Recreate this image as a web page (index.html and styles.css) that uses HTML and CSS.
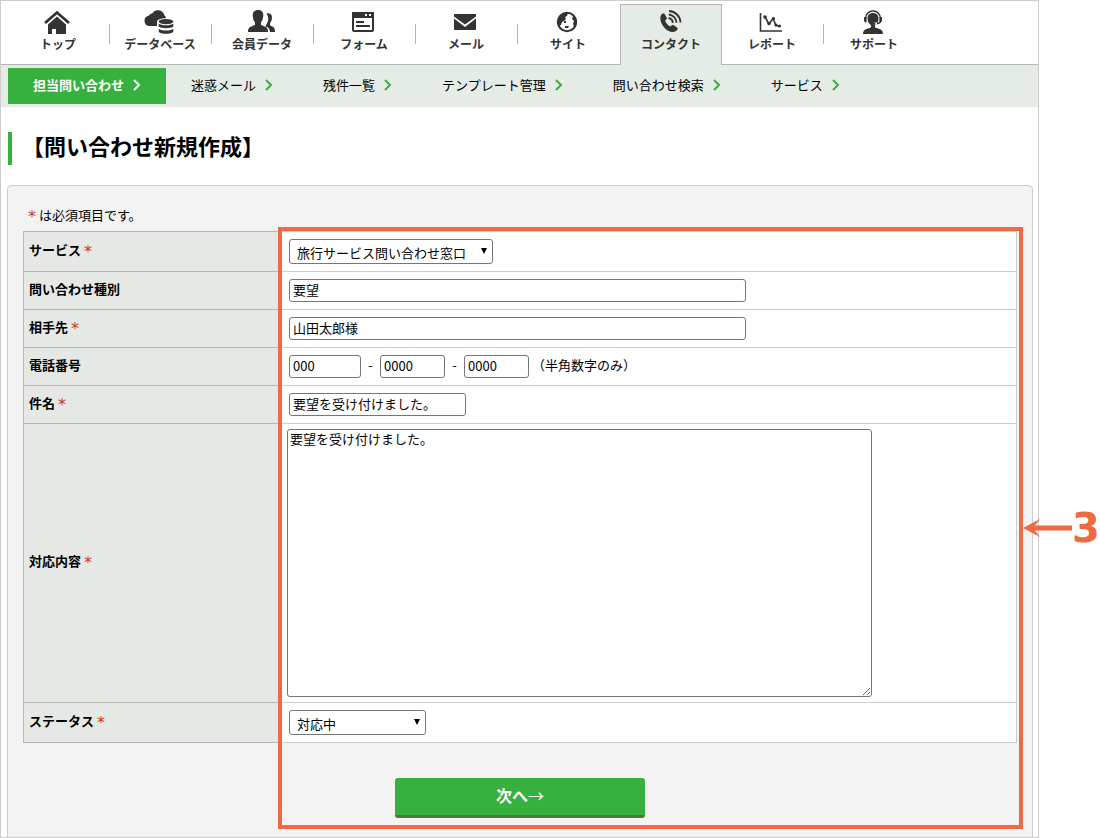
FILE: index.html
```html
<!DOCTYPE html>
<html lang="ja">
<head>
  <meta charset="UTF-8">
  <meta name="viewport" content="width=device-width, initial-scale=1.0">
  <title>問い合わせ新規作成</title>
  <link rel="stylesheet" href="styles.css">
</head>
<body>
  <div class="window">
    <nav class="main-nav">
      <a class="nav-item" href="#">
        <svg class="nav-icon" viewBox="0 0 32 26">
          <path d="M3 14 15 3.500 27 14" fill="none" stroke="#333" stroke-width="2.800"/>
          <path d="M6 15.500 15 7.500 24 15.500V25H14v-5h-4v5H6z"/>
        </svg>
        <span>トップ</span>
      </a>
      <a class="nav-item" href="#">
        <svg class="nav-icon" viewBox="0 0 32 26">
          <path d="M5.500 17a5.200 5.200 0 0 1-.8-10.300A4 4 0 0 1 8.200 4.500 6.600 6.600 0 0 1 20.300 6 5 5 0 0 1 22 9.200c-5 0-9 1-9 4V17z"/>
          <ellipse cx="22" cy="12.600" rx="7.300" ry="2.600"/>
          <path d="M14.700 14.500c2 2.400 12.600 2.400 14.600 0v3c-2 2.300-12.600 2.300-14.600 0zM14.700 19.800c2 2.400 12.600 2.400 14.600 0v3c-2 2.700-12.600 2.700-14.600 0z"/>
        </svg>
        <span>データベース</span>
      </a>
      <a class="nav-item" href="#">
        <svg class="nav-icon" viewBox="0 0 32 26">
          <path d="M20.500 4.500c4.500-.8 6.200 2.200 5.200 6.500l-1.600 3.200v2.300c3.500 1.500 4.900 1.800 4.900 6.500h-5c-.4-3.500-1.500-4.500-4.500-5.500l1.500-3.200c2-3.300 1.500-7-.5-9.800z"/>
          <path d="M12 1c4 0 5.800 2.700 5.200 6.500-.3 3-1 4.500-2.200 5.800v2.800c4.500 1.800 7 2 7 6.900H2c0-4.900 2.500-5.100 7-6.900v-2.800C7.800 12 7.100 10.500 6.800 7.500 6.200 3.700 8 1 12 1z"/>
        </svg>
        <span>会員データ</span>
      </a>
      <a class="nav-item" href="#">
        <svg class="nav-icon" viewBox="0 0 32 26">
          <rect x="5" y="4" width="20" height="18" rx="1" fill="#fff" stroke="#333" stroke-width="2"/>
          <path d="M4 3h22v6H4z"/>
          <path d="M17 5h2v2h-2zM21 5h2v2h-2z" fill="#fff"/>
          <path d="M8 12h8v2H8zM8 16h14v2H8z"/>
        </svg>
        <span>フォーム</span>
      </a>
      <a class="nav-item" href="#">
        <svg class="nav-icon" viewBox="0 0 32 26">
          <path d="M4 5h22v2.500L15 15.500 4 7.500z"/>
          <path d="M4 9.500 15 18l11-8.500V20a1 1 0 0 1-1 1H5a1 1 0 0 1-1-1z"/>
        </svg>
        <span>メール</span>
      </a>
      <a class="nav-item" href="#">
        <svg class="nav-icon" viewBox="0 0 32 26">
          <circle cx="15" cy="13" r="9.200" fill="#fff" stroke="#333" stroke-width="2"/>
          <path d="M8 7l5-3h3l-1 3-2 1 1 2-2 2-2 1-1 3-2 1-2-3z"/>
          <path d="M19 4l5 5 1 5-2 5-2 1 1-3-1-2 1-3-2-2 1-3z"/>
          <path d="M13 17h4l-1 2h-3zM12 12h2v2h-2z"/>
        </svg>
        <span>サイト</span>
      </a>
      <a class="nav-item active" href="#">
        <svg class="nav-icon" viewBox="0 0 32 26">
          <path d="M6.200 5.800C7 4.600 8.500 4 9.500 4.800l2.300 4c.3.900-.2 1.600-1.700 2.700.8 2.700 2.600 4.700 5.300 6 1.200-1.300 2-1.900 3-1.400l4 2.600c.8.800-.2 2.600-1.700 3.500-3.500 2.100-8.500-.2-11.700-4C5.600 14 4.300 8.700 6.200 5.800z"/>
          <path d="M13.500 9a5 5 0 0 1 4.200 5M13.800 5.500a8.500 8.500 0 0 1 7.700 8.200M14 2a12 12 0 0 1 11.500 11.500" fill="none" stroke="#333" stroke-width="1.800"/>
        </svg>
        <span>コンタクト</span>
      </a>
      <a class="nav-item" href="#">
        <svg class="nav-icon" viewBox="0 0 32 26">
          <path d="M4.500 4v18H26M9 8l4 7 4-5.500 3 7 4 .5" fill="none" stroke="#333" stroke-width="1.600"/>
          <circle cx="9" cy="8" r="1.800"/>
          <circle cx="13" cy="14.500" r="1.800"/>
          <circle cx="17.500" cy="9.500" r="1.600"/>
          <circle cx="20" cy="16" r="1.600"/>
          <circle cx="23.500" cy="17" r="1.600"/>
        </svg>
        <span>レポート</span>
      </a>
      <a class="nav-item last" href="#">
        <svg class="nav-icon" viewBox="0 0 32 26">
          <path d="M7.500 11V9.500a7.500 7.500 0 0 1 15 0V12c0 2-2 2.600-5 2.600" fill="none" stroke="#333" stroke-width="1.500"/>
          <path d="M15 4c3.600 0 5.500 2.300 5.500 5.500 0 2.500-.8 4-1.500 5l-2 1.700v2.300c4.500 1.500 8 1.700 8 6.500H5c0-4.800 3.500-5 8-6.500v-2.300c-2-1.200-3.500-3.500-3.500-6.700C9.500 6.300 11.400 4 15 4z"/>
          <path d="M6 8h2.500v5.500H7.500Q6 13 6 11zM21.500 8H24v3q0 2-1.500 2.500h-1z"/>
          <path d="M15 13.500h4v2h-4z" fill="#fff"/>
          <circle cx="16" cy="14.500" r="1.300"/>
        </svg>
        <span>サポート</span>
      </a>
    </nav>

    <nav class="sub-nav">
      <a class="sub-item active" href="#">担当問い合わせ<svg class="chevron" viewBox="0 0 8 12"><path d="M1 1l5 5-5 5"/></svg></a>
      <a class="sub-item" href="#">迷惑メール<svg class="chevron" viewBox="0 0 8 12"><path d="M1 1l5 5-5 5"/></svg></a>
      <a class="sub-item" href="#">残件一覧<svg class="chevron" viewBox="0 0 8 12"><path d="M1 1l5 5-5 5"/></svg></a>
      <a class="sub-item" href="#">テンプレート管理<svg class="chevron" viewBox="0 0 8 12"><path d="M1 1l5 5-5 5"/></svg></a>
      <a class="sub-item" href="#">問い合わせ検索<svg class="chevron" viewBox="0 0 8 12"><path d="M1 1l5 5-5 5"/></svg></a>
      <a class="sub-item" href="#">サービス<svg class="chevron" viewBox="0 0 8 12"><path d="M1 1l5 5-5 5"/></svg></a>
    </nav>

    <h1 class="page-title">【問い合わせ新規作成】</h1>

    <form class="panel">
      <p class="note"><span class="required">*</span> は必須項目です。</p>
      <div class="form-body">
        <table class="form-table">
          <tr class="select-row">
            <th><label for="service">サービス</label> <span class="required">*</span></th>
            <td>
              <span class="select-wrap select-service">
                <select id="service"><option>旅行サービス問い合わせ窓口</option></select>
              </span>
            </td>
          </tr>
          <tr>
            <th><label for="kind">問い合わせ種別</label></th>
            <td><input class="input-long" type="text" id="kind" value="要望"></td>
          </tr>
          <tr>
            <th><label for="customer">相手先</label> <span class="required">*</span></th>
            <td><input class="input-long" type="text" id="customer" value="山田太郎様"></td>
          </tr>
          <tr>
            <th><label for="tel1">電話番号</label></th>
            <td>
              <div class="tel">
                <input class="input-tel-first" type="text" id="tel1" value="000">
                <span class="dash">-</span>
                <input class="input-tel" type="text" aria-label="電話番号2" value="0000">
                <span class="dash">-</span>
                <input class="input-tel" type="text" aria-label="電話番号3" value="0000">
                <span class="tel-note">（半角数字のみ）</span>
              </div>
            </td>
          </tr>
          <tr>
            <th><label for="subject">件名</label> <span class="required">*</span></th>
            <td><input class="input-subject" type="text" id="subject" value="要望を受け付けました。"></td>
          </tr>
          <tr>
            <th><label for="content">対応内容</label> <span class="required">*</span></th>
            <td class="content-cell"><textarea id="content">要望を受け付けました。</textarea></td>
          </tr>
          <tr class="select-row">
            <th><label for="status">ステータス</label> <span class="required">*</span></th>
            <td>
              <span class="select-wrap select-status">
                <select id="status"><option>対応中</option></select>
              </span>
            </td>
          </tr>
        </table>
        <button class="next-btn" type="button">次へ<span class="next-arrow">→</span></button>

        <!-- step 3 marker -->
        <div class="highlight">
          <div class="callout">
            <svg class="callout-arrow" viewBox="0 0 49 18">
              <path d="M0 9 17 0 12 6.500H49v5H12L17 18z"/>
            </svg>
            <span>3</span>
          </div>
        </div>
      </div>
    </form>
  </div>
</body>
</html>
```
FILE: styles.css
```css
* {
  box-sizing: border-box;
}

body {
  margin: 0;
  background: #fff;
  color: #000;
  font-family: "Noto Sans CJK JP", sans-serif;
  font-size: 13px;
  line-height: 20px;
}

a {
  color: inherit;
  text-decoration: none;
}

.window {
  margin-right: 61px;
  border: 1px solid #ccc;
}

/* main navigation */
.main-nav {
  display: flex;
  padding: 3px 0 0 7px;
  border-bottom: 1px solid #b4b8b4;
}

.nav-item {
  display: flex;
  flex-direction: column;
  align-items: center;
  width: 102px;
  height: 60px;
  padding: 5px 2px 0 0;
  color: #333;
  font-size: 12px;
  font-weight: bold;
  line-height: 18px;
  background: linear-gradient(#b4b4b4, #b4b4b4) no-repeat right 20px / 1px 20px;
}

.nav-item:nth-child(6),
.nav-item.last {
  background: none;
}

.nav-item.active {
  height: 61px;
  margin-bottom: -1px;
  padding: 4px 0 0;
  background: #e5ece5;
  border: 1px solid #b4b8b4;
  border-bottom: none;
}

.nav-icon {
  width: 32px;
  height: 26px;
  fill: #333;
}

/* sub navigation */
.sub-nav {
  display: flex;
  padding: 3px 7px;
  background: #e5ece5;
}

.sub-item {
  display: flex;
  align-items: center;
  height: 36px;
  padding: 0 25px 2px;
}

.sub-item.active {
  background: #36b03f;
  color: #fff;
  font-weight: bold;
}

.chevron {
  width: 8px;
  height: 12px;
  margin-left: 9px;
  fill: none;
  stroke: #36b03f;
  stroke-width: 2;
}

.sub-item.active .chevron {
  stroke: #fff;
}

.page-title {
  margin: 25px 7px 20px;
  padding: 0 0 6px 10px;
  border-left: 4px solid #36b03f;
  font-size: 22px;
  line-height: 27px;
}

/* form */
.panel {
  margin: 0 5px 0 6px;
  padding: 19px 15px 19px;
  background: #f3f3f3;
  border: 1px solid #ccc;
  border-bottom: none;
  border-radius: 5px 5px 0 0;
}

.note {
  margin: 0 0 6px;
  padding-left: 5px;
}

.required {
  color: #c83a22;
  font-family: "DejaVu Sans", sans-serif;
  font-size: 16px;
  font-weight: normal;
  line-height: 16px;
  vertical-align: -2px;
}

.form-body {
  position: relative;
}

.form-table {
  width: 100%;
  border-collapse: collapse;
  background: #fff;
}

.form-table tr {
  height: 38px;
}

.form-table .select-row {
  height: 40px;
}

.form-table th {
  width: 258px;
  padding: 0 5px 4px;
  background: #e5e8e5;
  border: 1px solid #b4b8b4;
  text-align: left;
}

.form-table td {
  padding: 0 7px;
  border: 1px solid #ccc;
}

.form-table .content-cell {
  padding: 5px;
}

input,
select,
textarea {
  display: block;
  margin: 0;
  background: #fff;
  color: #000;
  border: 1px solid #767676;
  border-radius: 3px;
  font-family: inherit;
  font-size: 13px;
}

input {
  height: 23px;
  padding: 0 3px 2px;
}

.input-long {
  width: 457px;
}

.input-subject {
  width: 177px;
}

.tel {
  display: flex;
  align-items: center;
}

.input-tel-first {
  width: 72px;
}

.input-tel {
  width: 65px;
}

.dash {
  width: 19px;
  padding-bottom: 3px;
  text-align: center;
}

.tel-note {
  padding: 0 0 3px 3px;
}

textarea {
  width: 585px;
  height: 268px;
  padding: 0 2px;
  line-height: 18px;
}

.select-wrap {
  display: block;
  position: relative;
}

.select-wrap::after {
  content: "";
  position: absolute;
  top: 9px;
  right: 6px;
  border: 3px solid transparent;
  border-top: 6px solid #000;
  border-bottom: none;
  pointer-events: none;
}

.select-service {
  width: 204px;
}

.select-status {
  width: 137px;
}

select {
  appearance: none;
  width: 100%;
  height: 25px;
  padding: 2px 7px 0;
}

.next-btn {
  display: block;
  width: 250px;
  height: 40px;
  margin: 35px auto 0;
  padding: 0 0 4px;
  background: #36b03f;
  color: #fff;
  border: none;
  border-bottom: 3px solid #4c7a34;
  border-radius: 3px;
  font-family: inherit;
  font-size: 16px;
  font-weight: bold;
  cursor: pointer;
}

.next-arrow {
  font-weight: normal;
}

/* numbered marker over the input column */
.highlight {
  position: absolute;
  top: -4px;
  right: -6px;
  bottom: -11px;
  left: 255px;
  border: 4px solid #ee6a42;
  pointer-events: none;
}

.callout {
  position: absolute;
  top: 50%;
  left: 100%;
  display: flex;
  align-items: center;
  margin-left: 4px;
  color: #ee6a42;
  font-family: "DejaVu Sans", sans-serif;
  font-size: 40px;
  font-weight: bold;
  line-height: 42px;
  transform: translateY(-50%);
}

.callout-arrow {
  width: 49px;
  height: 18px;
  fill: #ee6a42;
}
```
